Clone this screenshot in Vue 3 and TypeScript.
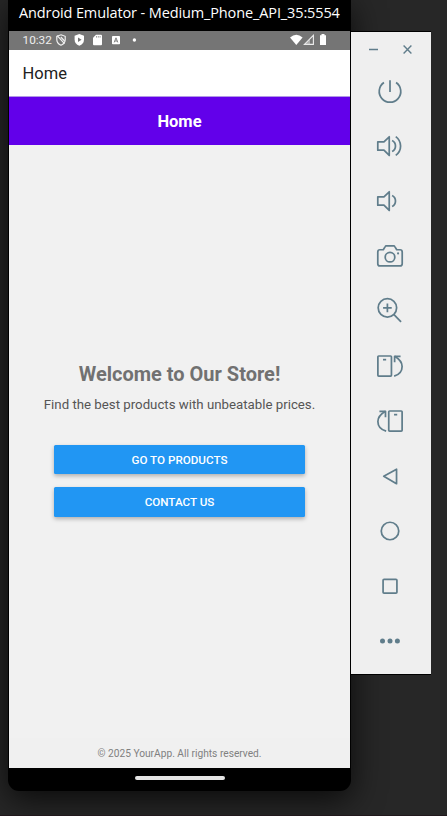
<script setup lang="ts">
interface Tool {
  name: string
  strokes: string[]
  dots?: [number, number, number][]
}

const speaker = 'M2.3 10.7H8.7L14.2 5.4V24.8L8.7 19.3H2.3Z'

const tools: Tool[] = [
  { name: 'Power', strokes: ['M15 3.8V16', 'M8.7 6.2A11.2 11.2 0 1 0 21.3 6.2'] },
  { name: 'Volume up', strokes: [speaker, 'M17.2 9.2Q20.7 11 20.7 15T17.2 20.8', 'M21 5.2Q26 9 26 15T21 24.8'] },
  { name: 'Volume down', strokes: [speaker, 'M17.2 9.2Q20.7 11 20.7 15T17.2 20.8'] },
  {
    name: 'Screenshot',
    strokes: [
      'M4.5 8.5H8L10 5.2Q10.4 4.5 11 4.5H19Q19.6 4.5 20 5.2L22 8.5H25.4Q27.7 8.5 27.7 10.8V23Q27.7 25.3 25.4 25.3H4.5Q2.3 25.3 2.3 23V10.8Q2.3 8.5 4.5 8.5Z',
      'M20 16.2A5 5 0 1 1 10 16.2A5 5 0 1 1 20 16.2Z',
    ],
    dots: [[23.4, 12.3, 1.1]],
  },
  { name: 'Zoom', strokes: ['M21.9 11.7A9.6 9.6 0 1 1 2.7 11.7A9.6 9.6 0 1 1 21.9 11.7Z', 'M12.3 7.2V16.2M7.8 11.7H16.8', 'M18.9 18.6L26.5 26.2'] },
  { name: 'Rotate left', strokes: ['M3.3 4.6H15.6Q16.5 4.6 16.5 5.5V24.7Q16.5 25.6 15.6 25.6H3.3Q2.4 25.6 2.4 24.7V5.5Q2.4 4.6 3.3 4.6Z', 'M7.7 8.4H11', 'M26 4.9H19.8V11', 'M19.8 4.9Q27.6 9.5 27.6 15.5Q27.6 23 19.3 25.6'] },
  { name: 'Rotate right', strokes: ['M14.6 4.6H26.7Q27.6 4.6 27.6 5.5V24.7Q27.6 25.6 26.7 25.6H14.6Q13.7 25.6 13.7 24.7V5.5Q13.7 4.6 14.6 4.6Z', 'M19.2 8.4H22.5', 'M4 4.9H10.3V11', 'M10.3 4.9Q2.4 9.5 2.4 15.5Q2.4 23 11 25.6'] },
  { name: 'Back', strokes: ['M8.5 15.2L21.8 8V23Z'] },
  { name: 'Home', strokes: ['M24.1 15A9.1 9.1 0 1 1 5.9 15A9.1 9.1 0 1 1 24.1 15Z'] },
  { name: 'Overview', strokes: ['M8.8 8H21.2Q22.2 8 22.2 9V21.4Q22.2 22.4 21.2 22.4H8.8Q7.8 22.4 7.8 21.4V9Q7.8 8 8.8 8Z'] },
  { name: 'More', strokes: [], dots: [[7.2, 15, 2.6], [15, 15, 2.6], [22.7, 15, 2.6]] },
]

const actions: string[] = ['GO TO PRODUCTS', 'CONTACT US']
</script>

<template>
  <div class="desktop">
    <section class="phone">
      <div class="window-title">Android Emulator - Medium_Phone_API_35:5554</div>
      <div class="screen">
        <div class="status">
          <span class="clock">10:32</span>
          <svg class="notices" width="84" height="12" viewBox="0 0 84 12">
            <path d="M5 .8L9.2 2.3V5.8Q9.2 9.4 5 11.3Q.8 9.4 .8 5.8V2.3Z" fill="none" stroke="#f0f0f0" stroke-width="1.2" />
            <path d="M1.2 1.6L8.5 9.6M4.8 3L8.6 7" stroke="#f0f0f0" stroke-width="1.2" />
            <path d="M23.3 0L28 1.8V5.5Q28 9.8 23.3 11.8Q18.6 9.8 18.6 5.5V1.8Z" fill="#fff" />
            <path d="M22 3.6L25.6 5.8L22 8Z" fill="#757575" />
            <path d="M40 .7H45Q46 .7 46 1.7V10.2Q46 11.2 45 11.2H38Q37 11.2 37 10.2V3.7Z" fill="#fff" />
            <path d="M40.5 2V3.6M42.3 2V3.6M44.1 2V3.6" stroke="#858585" stroke-width=".8" />
            <rect x="56" y="2" width="8" height="8.3" rx=".8" fill="#fff" />
            <path d="M58.2 8.4L60 3.8L61.8 8.4M58.9 7H61.1" fill="none" stroke="#757575" stroke-width=".9" />
            <circle cx="78.4" cy="6" r="1.7" fill="#fff" />
          </svg>
          <svg class="signals" width="38" height="12" viewBox="0 0 38 12">
            <path d="M0 3.4Q6.3-2 12.6 3.4L6.3 11Z" fill="#fff" />
            <path d="M23.4 1.3V10.4H14.4Z" fill="none" stroke="#eee" stroke-width="1.1" />
            <path d="M20 5V10.4H14.6Z" fill="#ddd" opacity=".55" />
            <path d="M31.5 0H34.5V1.3H36V11H30V1.3H31.5Z" fill="#fff" />
          </svg>
        </div>
        <header class="app-bar">Home</header>
        <div class="banner">Home</div>
        <main class="content">
          <h1>Welcome to Our Store!</h1>
          <p>Find the best products with unbeatable prices.</p>
          <button v-for="label in actions" :key="label" type="button">{{ label }}</button>
        </main>
        <footer>© 2025 YourApp. All rights reserved.</footer>
      </div>
      <div class="gesture"><span></span></div>
    </section>
    <aside class="toolbar">
      <div class="controls">
        <svg width="60" height="16" viewBox="0 0 60 16">
          <path d="M3 7.5H12M37.6 3.6L45.4 11.4M45.4 3.6L37.6 11.4" />
        </svg>
      </div>
      <div v-for="tool in tools" :key="tool.name" class="tool">
        <svg width="30" height="30" viewBox="-0.6 -0.6 31.2 31.2">
          <path v-for="d in tool.strokes" :key="d" :d="d" />
          <circle v-for="dot in tool.dots" :key="dot[0]" :cx="dot[0]" :cy="dot[1]" :r="dot[2]" />
        </svg>
      </div>
    </aside>
  </div>
</template>

<style>
body {
  margin: 0;
  background: #272727;
}
</style>

<style scoped>
.desktop {
  box-sizing: border-box;
  width: 447px;
  height: 816px;
  padding-left: 8px;
  display: flex;
  align-items: flex-start;
  overflow: hidden;
  background: #272727;
  border-bottom: 1px solid #21181c;
  font-family: Roboto, "Liberation Sans", sans-serif;
}
.phone {
  box-sizing: border-box;
  width: 343px;
  height: 791px;
  padding: 0 1px;
  background: #000;
  border-radius: 0 0 11px 11px;
  box-shadow: 0 8px 32px rgba(0, 0, 0, 0.75);
  display: flex;
  flex-direction: column;
  flex: none;
}
.window-title {
  height: 31px;
  line-height: 26px;
  padding-left: 10px;
  box-sizing: border-box;
  color: #fff;
  font-family: "Open Sans", "Noto Sans", sans-serif;
  font-size: 14.5px;
  letter-spacing: -0.12px;
  white-space: nowrap;
}
.screen {
  height: 737px;
  display: flex;
  flex-direction: column;
  background: #f1f1f1;
}
.status {
  height: 19px;
  flex: none;
  background: #757575;
  display: flex;
  align-items: center;
  padding: 0 22px 1px 13.5px;
  box-sizing: border-box;
}
.clock {
  width: 33.5px;
  color: #eee;
  font-size: 11.8px;
  line-height: 18px;
}
.notices {
  display: block;
}
.signals {
  display: block;
  margin-left: auto;
}
.app-bar {
  box-sizing: border-box;
  height: 47px;
  flex: none;
  padding-left: 13.5px;
  line-height: 48px;
  background: #fff;
  border-bottom: 1px solid #b197e5;
  color: #212121;
  font-size: 16.5px;
}
.banner {
  height: 48px;
  flex: none;
  line-height: 49px;
  background: #6200ea;
  color: #fff;
  font-size: 16.5px;
  font-weight: 700;
  text-align: center;
}
.content {
  flex: 1;
  display: flex;
  flex-direction: column;
  align-items: center;
  padding-top: 216px;
}
h1 {
  margin: 0;
  font-size: 20px;
  line-height: 27px;
  font-weight: 700;
  color: #717171;
}
p {
  margin: 7px 0 29.7px;
  font-size: 13.25px;
  line-height: 20px;
  color: #555;
}
button {
  width: 251px;
  height: 29.3px;
  margin: 0 0 13.3px;
  padding: 0;
  border: 0;
  border-radius: 1.5px;
  background: #2196f3;
  box-shadow: 0 2px 4px rgba(0, 0, 0, 0.28);
  color: #fff;
  font-family: inherit;
  font-size: 11.65px;
  font-weight: 500;
  line-height: 30px;
}
footer {
  height: 30px;
  line-height: 31px;
  background: #f0f0f0;
  color: #808080;
  font-size: 10.2px;
  text-align: center;
}
.gesture {
  height: 20px;
  display: flex;
  align-items: center;
  justify-content: center;
}
.gesture span {
  width: 90px;
  height: 4px;
  border-radius: 2px;
  background: #e5e5e5;
}
.toolbar {
  position: relative;
  box-sizing: border-box;
  width: 80px;
  height: 644px;
  margin-top: 31px;
  background: #efefef;
  border-top: 1px solid #000;
  border-bottom: 1px solid #000;
}
.controls {
  height: 31px;
  box-sizing: border-box;
  padding: 10px 0 0 15px;
}
.toolbar svg {
  display: block;
  fill: none;
  stroke: #607d8b;
  stroke-width: 1.8;
  stroke-linejoin: round;
}
.controls svg {
  stroke-width: 1.4;
}
.tool {
  height: 55px;
  padding-left: 24px;
  display: flex;
  align-items: center;
}
.tool circle {
  fill: #607d8b;
  stroke: none;
}
</style>
